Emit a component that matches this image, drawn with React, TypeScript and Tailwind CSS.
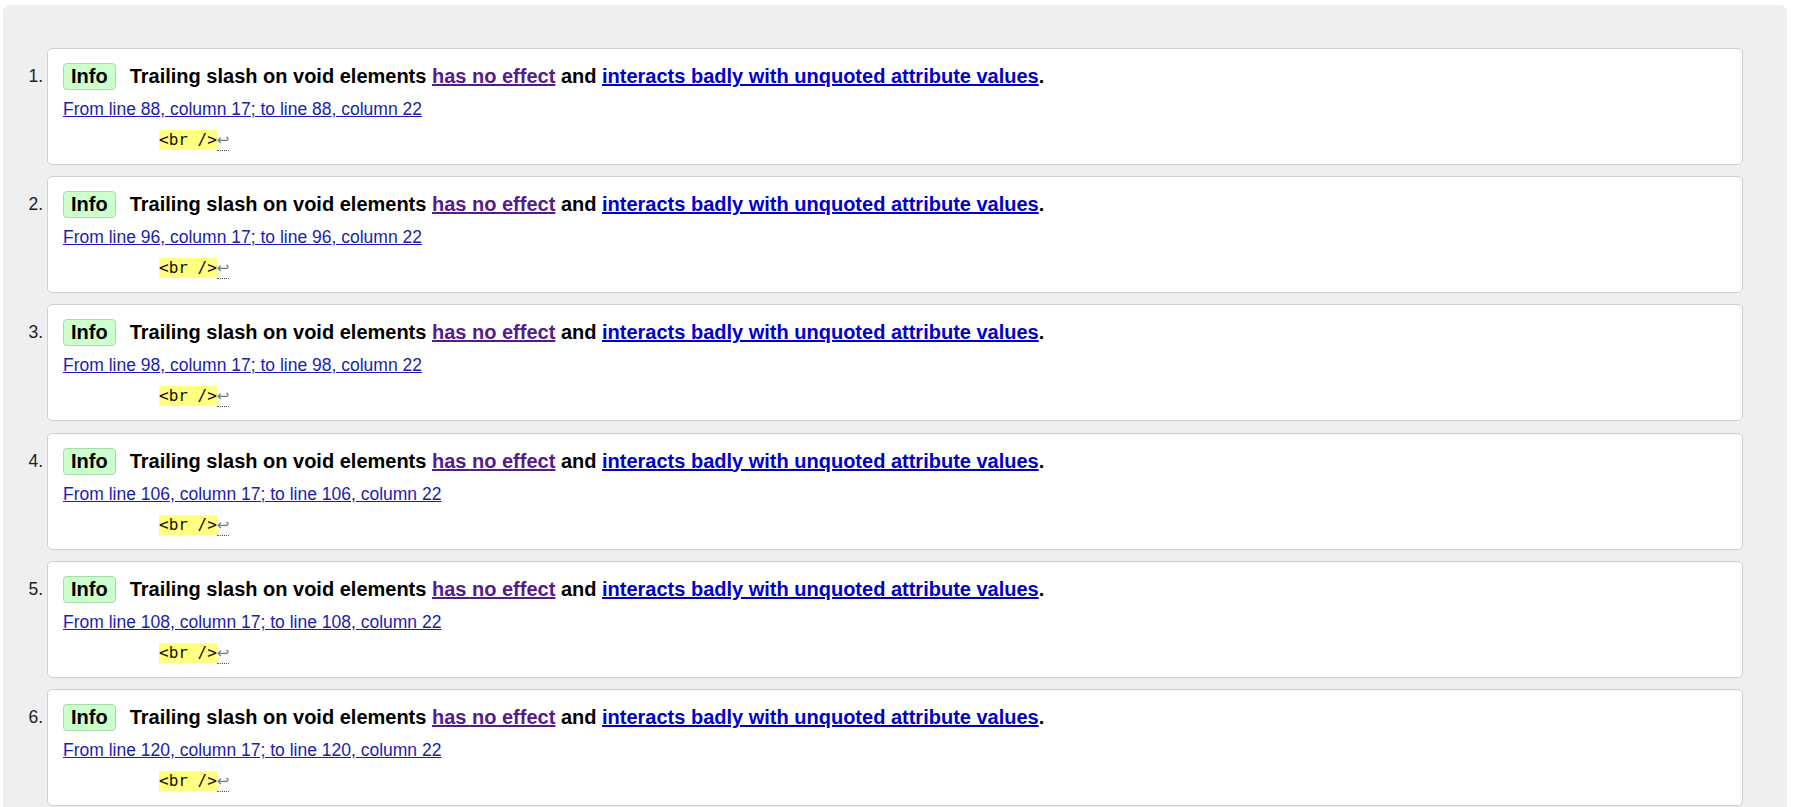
import React from 'react'

const messages = [
  { n: 1, line: 88 },
  { n: 2, line: 96 },
  { n: 3, line: 98 },
  { n: 4, line: 106 },
  { n: 5, line: 108 },
  { n: 6, line: 120 },
]

const Message: React.FC<{ n: number; line: number }> = ({ n, line }) => {
  return (
    <li className="flex">
      <div className="w-[44px] shrink-0 pr-[4px] pt-[15px] text-right text-[17.5px] leading-[27px] text-[#222]">
        {n}.
      </div>
      <div className="flex-1 rounded-[5px] border border-[#cfcfcf] bg-white pt-[14px] pr-[15px] pb-[14px] pl-[15px]">
        <div className="flex h-[27px] items-center">
          <span className="mr-[14px] h-[27px] rounded-[4px] border border-[#a8dca8] bg-[#ccffcc] px-[7px] text-[20px] font-bold leading-[25px] text-black">
            Info
          </span>
          <p className="text-[20px] font-bold leading-[27px] text-black">
            Trailing slash on void elements{' '}
            <a href="#" className="text-[#551a8b] underline">has no effect</a> and{' '}
            <a href="#" className="text-[#0000cc] underline">interacts badly with unquoted attribute values</a>.
          </p>
        </div>
        <p className="mt-[8px] text-[17.5px] leading-[22px]">
          <a href="#" className="text-[#1c1cb0] underline">
            From line {line}, column 17; to line {line}, column 22
          </a>
        </p>
        <div className="mt-[10px] ml-[96px] flex h-[20px] items-center font-['DejaVu_Sans_Mono',monospace] text-[16px] leading-[20px]">
          <span className="bg-[#ffff80] text-[#111]">&lt;br /&gt;</span>
          <span className="mt-[2px] border-b border-dotted border-[#555] font-['DejaVu_Sans',sans-serif] text-[15px] leading-[19px] text-[#777]">↩</span>
        </div>
      </div>
    </li>
  )
}

export default function App() {
  return (
    <div className="min-h-screen bg-white pt-[5px] pl-[3px] pr-[21px] font-['Liberation_Sans',Arial,sans-serif]">
      <div className="rounded-t-[7px] bg-[#efefef] pt-[43px] pr-[44px] pb-[40px]">
        <ol className="flex flex-col gap-[11.2px]">
          {messages.map((m) => (
            <Message key={m.n} n={m.n} line={m.line} />
          ))}
        </ol>
      </div>
    </div>
  )
}
